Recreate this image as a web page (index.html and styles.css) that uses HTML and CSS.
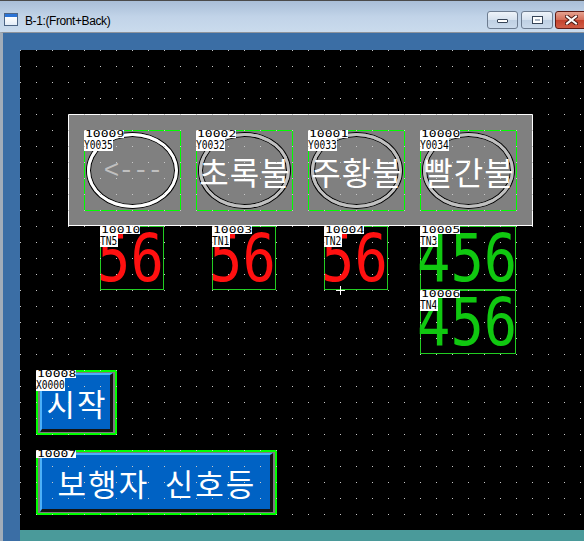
FILE: index.html
```html
<!DOCTYPE html>
<html lang="ko">
<head>
<meta charset="utf-8">
<title>B-1:(Front+Back)</title>
<link rel="stylesheet" href="styles.css">
</head>
<body>
<div class="window">
  <header class="titlebar">
    <span class="app-icon"></span>
    <span class="title">B-1:(Front+Back)</span>
    <div class="caption-btns">
      <span class="cbtn min"><span class="g-min"></span></span>
      <span class="cbtn max"><span class="g-max"></span></span>
      <span class="cbtn close">
        <svg class="g-close" width="13" height="10" viewBox="0 0 13 10">
          <path d="M2 1.5 L11 8.5 M11 1.5 L2 8.5" stroke="#4a1a14" stroke-width="4" stroke-linecap="square"/>
          <path d="M2 1.5 L11 8.5 M11 1.5 L2 8.5" stroke="#fff" stroke-width="2" stroke-linecap="square"/>
        </svg>
      </span>
    </div>
  </header>
  <div class="frame">
    <div class="canvas">
      <div class="panel">
        <div class="lamp">
          <div class="tags"><span class="id"><i>10009</i></span><span class="tag w5"><i>Y0035</i></span></div>
          <div class="bulb on"><span class="arrow">&lt;---</span></div>
        </div>
        <div class="lamp">
          <div class="tags"><span class="id"><i>10002</i></span><span class="tag w5"><i>Y0032</i></span></div>
          <div class="bulb">초록불</div>
        </div>
        <div class="lamp">
          <div class="tags"><span class="id"><i>10001</i></span><span class="tag w5"><i>Y0033</i></span></div>
          <div class="bulb">주황불</div>
        </div>
        <div class="lamp">
          <div class="tags"><span class="id"><i>10000</i></span><span class="tag w5"><i>Y0034</i></span></div>
          <div class="bulb">빨간불</div>
        </div>
      </div>

      <div class="dbox d1">
        <div class="tags"><span class="id"><i>10010</i></span><span class="tag w3"><i>TN5</i></span></div>
        <span class="num red">56</span>
      </div>
      <div class="dbox d2">
        <div class="tags"><span class="id"><i>10003</i></span><span class="tag w3"><i>TN1</i></span></div>
        <span class="num red">56</span>
      </div>
      <div class="dbox d3">
        <div class="tags"><span class="id"><i>10004</i></span><span class="tag w3"><i>TN2</i></span></div>
        <span class="num red">56</span>
      </div>
      <div class="dbox d4">
        <div class="tags"><span class="id"><i>10005</i></span><span class="tag w3"><i>TN3</i></span></div>
        <span class="num grn">456</span>
      </div>
      <div class="dbox d5">
        <div class="tags"><span class="id"><i>10006</i></span><span class="tag w3"><i>TN4</i></span></div>
        <span class="num grn">456</span>
      </div>

      <div class="btn start">
        <div class="tags"><span class="id"><i>10008</i></span><span class="tag w5"><i>X0000</i></span></div>
        <div class="bezel"><div class="face">시작</div></div>
      </div>
      <div class="btn ped">
        <div class="tags"><span class="id"><i>10007</i></span></div>
        <div class="bezel"><div class="face">보행자 신호등</div></div>
      </div>

      <span class="cursor"></span>

      <svg class="grid" width="564" height="480" aria-hidden="true">
        <defs>
          <pattern id="dots" width="16" height="16" patternUnits="userSpaceOnUse">
            <rect width="1" height="1" fill="#c8c8c8"/>
          </pattern>
        </defs>
        <rect width="100%" height="100%" fill="url(#dots)"/>
      </svg>
    </div>
    <div class="floor"></div>
  </div>
</div>
</body>
</html>
```
FILE: styles.css
```css
html, body {
  margin: 0;
  padding: 0;
}
body {
  width: 584px;
  height: 541px;
  overflow: hidden;
  background: #3b6ea5;
  font-family: "Liberation Sans", sans-serif;
}
.window {
  display: flex;
  flex-direction: column;
  height: 541px;
}

/* ---------- title bar ---------- */
.titlebar {
  flex: 0 0 32px;
  box-sizing: border-box;
  border-top: 1px solid #4b4b4b;
  background: linear-gradient(#a9bed7, #c1d3e8 50%, #cadbed);
  display: flex;
  align-items: flex-start;
  padding: 10px 0 0 4px;
}
.app-icon {
  width: 14px;
  height: 13px;
  box-sizing: border-box;
  margin-top: 2px;
  border: 1px solid #4d6585;
  background: linear-gradient(#2b73d6 0, #2b73d6 3px, #ffffff 3px, #e4edf8);
}
.title {
  margin: 3px 0 0 7px;
  font-size: 12px;
  line-height: 14px;
  letter-spacing: -0.4px;
  color: #000;
}
.caption-btns {
  margin-left: auto;
  margin-right: -20px;
  display: flex;
}
.cbtn {
  height: 18px;
  box-sizing: border-box;
  border: 1px solid #6d7c90;
  border-radius: 3px;
  background: linear-gradient(#eef3f9, #d6e1ee 50%, #bfd0e3 51%, #cbdaeb);
  display: flex;
  justify-content: center;
  align-items: flex-start;
}
.min { width: 31px; }
.max { width: 32px; margin-left: 3px; }
.close {
  width: 49px;
  margin-left: 2px;
  border-color: #5e1a14;
  background: linear-gradient(#e6a391, #d46d57 50%, #c3412c 51%, #d05c45);
  justify-content: flex-start;
  padding-left: 9px;
}
.g-min {
  width: 11px;
  height: 4px;
  box-sizing: border-box;
  margin-top: 7px;
  border: 1px solid #364457;
  border-radius: 1px;
  background: #fff;
}
.g-max {
  width: 11px;
  height: 8px;
  box-sizing: border-box;
  margin-top: 4px;
  border: 1px solid #364457;
  background: #aab6c4;
  box-shadow: inset 0 0 0 2px #fff;
}
.g-close {
  margin-top: 3px;
  display: block;
}

/* ---------- editor frame ---------- */
.frame {
  flex: 1;
  display: flex;
  flex-direction: column;
  border-top: 1px solid #8d939b;
  border-left: 3px solid #a2adb9;
  padding: 17px 0 0 17px;
  background: #3b6ea5;
}
.canvas {
  position: relative;
  height: 480px;
  background: #000;
  overflow: hidden;
}
.floor {
  flex: 1;
  background: #4a9a9a;
}
.grid {
  position: absolute;
  left: 0;
  top: 0;
  z-index: 5;
  pointer-events: none;
}

/* ---------- tags ---------- */
.tags {
  position: absolute;
  left: -1px;
  top: -1px;
  z-index: 2;
  display: flex;
  flex-direction: column;
  align-items: flex-start;
}
.id {
  display: block;
  width: 40px;
  height: 8px;
  background: #fff;
  overflow: hidden;
  font: 9px/8px "DejaVu Sans Mono", monospace;
  color: #000;
}
.id i {
  display: inline-block;
  font-style: normal;
  transform: scaleX(1.45);
  transform-origin: 0 0;
  margin-left: 1px;
}
.tag {
  display: block;
  height: 13px;
  background: #fff;
  overflow: hidden;
  font: 12px/15px "DejaVu Sans Mono", monospace;
  color: #000;
}
.tag i {
  display: inline-block;
  font-style: normal;
  transform: scaleX(0.8);
  transform-origin: 0 0;
}
.w5 { width: 29px; }
.w3 { width: 18px; }

/* ---------- lamp panel ---------- */
.panel {
  position: absolute;
  left: 48px;
  top: 64px;
  width: 465px;
  height: 112px;
  box-sizing: border-box;
  border: 1px solid #fff;
  background: #808080;
  display: flex;
  gap: 15px;
  padding: 15px 0 0 15px;
}
.lamp {
  position: relative;
  flex: none;
  width: 97px;
  height: 81px;
  box-sizing: border-box;
  border: 1px solid #00ff00;
  display: flex;
  align-items: center;
  justify-content: center;
}
.bulb {
  width: 91px;
  height: 75px;
  box-sizing: border-box;
  border-radius: 50%;
  border: 3px solid #c0c0c0;
  box-shadow: 0 0 0 1px #000, inset 0 0 0 1px #000;
  display: flex;
  align-items: center;
  justify-content: center;
  color: #fff;
  font: 32px/1 "Noto Sans CJK KR", sans-serif;
  letter-spacing: 1px;
  padding-left: 1px;
  white-space: nowrap;
}
.bulb.on { border-color: #fff; }
.arrow {
  font: 26px/1 "Liberation Mono", monospace;
  letter-spacing: -1px;
  color: #c0c0c0;
}

/* ---------- numeric displays ---------- */
.dbox {
  position: absolute;
  box-sizing: border-box;
  border: 1px solid #22cc22;
}
.d1 { left: 80px;  top: 176px; width: 64px; height: 64px; }
.d2 { left: 192px; top: 176px; width: 64px; height: 64px; }
.d3 { left: 304px; top: 176px; width: 64px; height: 64px; }
.d4 { left: 400px; top: 176px; width: 96px; height: 64px; }
.d5 { left: 400px; top: 240px; width: 96px; height: 64px; }
.num {
  display: block;
  font: 66px/64px "DejaVu Sans Mono", monospace;
  transform: scaleX(0.84);
  transform-origin: 0 0;
  margin-left: -4px;
  white-space: nowrap;
}
.red { color: #ff1010; }
.grn { color: #10c810; }

/* ---------- buttons ---------- */
.btn {
  position: absolute;
  box-sizing: border-box;
  border: 2px solid #00ff00;
  display: flex;
}
.btn .tags { left: -2px; top: -2px; }
.start { left: 16px; top: 320px; width: 81px; height: 65px; }
.ped   { left: 16px; top: 400px; width: 241px; height: 65px; }
.bezel {
  flex: 1;
  display: flex;
  border-style: solid;
  border-width: 1px 2px 1px 2px;
  border-color: #7c7c7c;
}
.face {
  flex: 1;
  border-style: solid;
  border-width: 2px 3px 3px 2px;
  border-color: #4cb0f8 #121212 #121212 #4cb0f8;
  background: #0062c4;
  color: #fff;
  display: flex;
  align-items: center;
  justify-content: center;
  font: 31px/1 "Noto Sans CJK KR", sans-serif;
  letter-spacing: 2px;
  word-spacing: 5px;
  padding-left: 2px;
  white-space: nowrap;
}

/* ---------- mouse cursor ---------- */
.cursor {
  position: absolute;
  left: 316px;
  top: 236px;
  width: 9px;
  height: 9px;
  z-index: 6;
}
.cursor::before,
.cursor::after {
  content: "";
  position: absolute;
  background: #fff;
}
.cursor::before { left: 4px; top: 0; width: 1px; height: 9px; }
.cursor::after  { left: 0; top: 4px; width: 9px; height: 1px; }
```
